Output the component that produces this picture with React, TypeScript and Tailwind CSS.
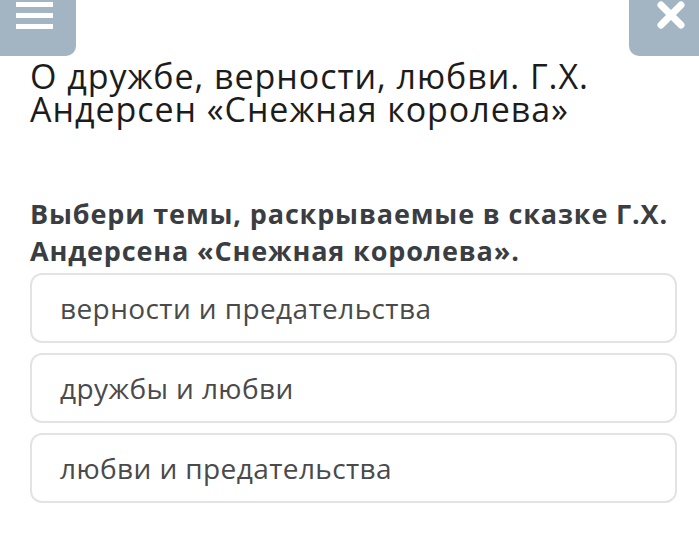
import React from "react";

export default function App() {
  const options = [
    "верности и предательства",
    "дружбы и любви",
    "любви и предательства",
  ];
  return (
    <div
      className="relative w-[699px] h-[555px] bg-white overflow-hidden"
      style={{ fontFamily: '"Open Sans", "Noto Sans", sans-serif' }}
    >
      <div className="flex justify-between">
        <div className="w-[76px] h-[56px] bg-[#a3b5c3] rounded-br-[10px] flex flex-col gap-[6px] pl-[16px] pt-[2px]">
          <div className="w-[37px] h-[5px] bg-white" />
          <div className="w-[37px] h-[5px] bg-white" />
          <div className="w-[37px] h-[5px] bg-white" />
        </div>
        <div className="w-[70px] h-[56px] bg-[#a3b5c3] rounded-bl-[10px] flex justify-center pt-[0px] pl-[14px]">
          <svg width="30" height="30" viewBox="0 0 30 30">
            <path d="M5 5 L25 25 M25 5 L5 25" stroke="white" strokeWidth="7" strokeLinecap="round" />
          </svg>
        </div>
      </div>
      <div className="px-[30px]">
        <h1 className="text-[34px] leading-[33px] tracking-[0.95px] text-[#1c1c1c] mt-[4px]">
          О дружбе, верности, любви. Г.Х. Андерсен «Снежная королева»
        </h1>
        <p className="mt-[69px] text-[27px] leading-[37px] tracking-[0.85px] font-bold text-[#3a3e42]">
          Выбери темы, раскрываемые в сказке Г.Х. Андерсена «Снежная королева».
        </p>
        <div className="flex flex-col gap-[10px] mt-[4px] w-[647px]">
          {options.map((o) => (
            <div
              key={o}
              className="h-[70px] border-2 border-[#e3e3e3] rounded-[12px] flex items-center pl-[28px] text-[28px] tracking-[0.4px] text-[#4a4a4a]"
            >
              {o}
            </div>
          ))}
        </div>
      </div>
    </div>
  );
}
